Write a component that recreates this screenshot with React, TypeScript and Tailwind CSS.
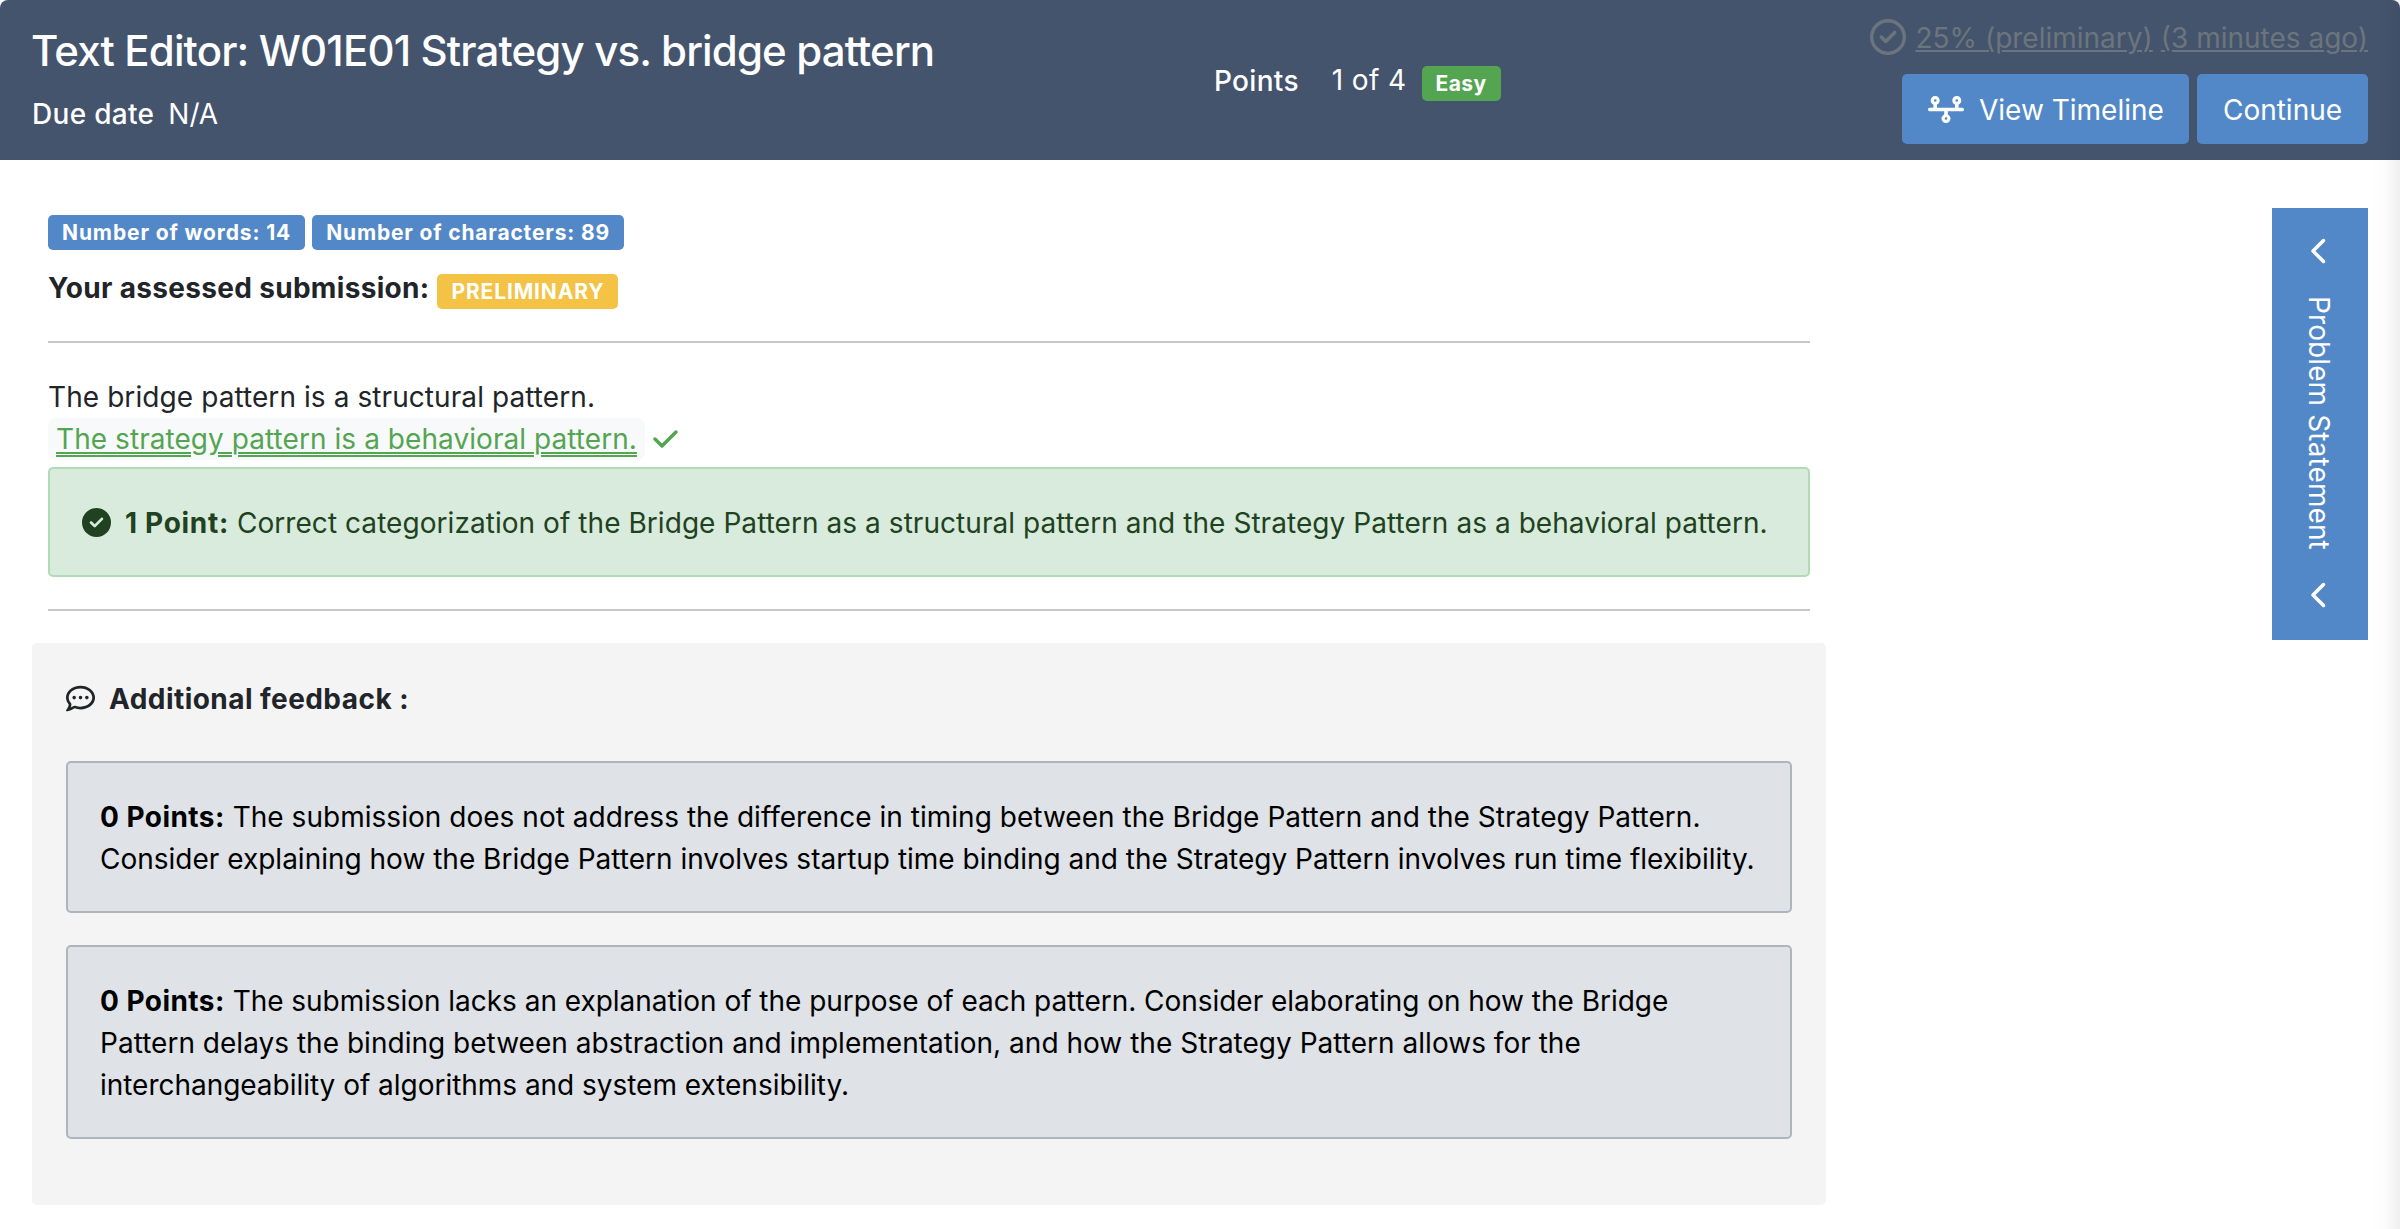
import type { ReactNode } from 'react';
import {
  FaCheck,
  FaChevronLeft,
  FaCircleCheck,
  FaRegCircleCheck,
  FaRegCommentDots,
  FaTimeline,
} from 'react-icons/fa6';

function Badge({ className, children }: { className: string; children: ReactNode }) {
  return (
    <span className={`block h-[35px] rounded-[5px] px-[14px] text-[21px] leading-[35px] font-bold text-white ${className}`}>
      {children}
    </span>
  );
}

function Header() {
  return (
    <header className="flex h-40 rounded-t-lg bg-[#44546d] pr-8 pl-8 text-white">
      <div className="w-[1182px] pt-[25px]">
        <h1 className="-ml-px text-[42px] leading-[51px] font-medium tracking-[-0.85px]">
          Text Editor: W01E01 Strategy vs. bridge pattern
        </h1>
        <div className="mt-[17px] flex">
          <span className="font-medium tracking-[0.3px]">Due date</span>
          <span className="ml-[14px]">N/A</span>
        </div>
      </div>
      <div className="flex pt-[59px]">
        <span className="mt-px font-medium tracking-[0.3px]">Points</span>
        <span className="ml-[33px] tracking-[0.4px]">1 of 4</span>
        <Badge className="mt-[7px] ml-[15px] bg-[#54a551] tracking-[0.4px]">Easy</Badge>
      </div>
      <div className="ml-auto flex flex-col items-end pt-[17px]">
        <div className="flex text-[#6c757d]">
          <FaRegCircleCheck className="mt-[2px] mr-[9px] size-9" />
          <div className="flex gap-2 underline decoration-2 underline-offset-2">
            <span>25% (preliminary)</span>
            <span>(3 minutes ago)</span>
          </div>
        </div>
        <div className="mt-[15px] flex gap-2">
          <button className="flex h-[70px] w-[287px] items-center rounded-[5px] bg-[#5388c8] pl-[26px]">
            <FaTimeline className="h-[29px] w-9" />
            <span className="mt-[2px] ml-[15px]">View Timeline</span>
          </button>
          <button className="h-[70px] w-[171px] rounded-[5px] bg-[#5388c8] pt-[2px]">Continue</button>
        </div>
      </div>
    </header>
  );
}

function FeedbackCard({ className = '', children }: { className?: string; children: ReactNode }) {
  return (
    <div
      className={`rounded-[5px] border-2 border-[#adb5bd] bg-[#dfe2e6] pt-[33px] pr-8 pb-[31px] pl-8 whitespace-nowrap text-black ${className}`}
    >
      <strong className="tracking-[0.45px]">0 Points:</strong> {children}
    </div>
  );
}

function Submission() {
  return (
    <section className="px-4">
      <div className="flex gap-[7px]">
        <Badge className="bg-[#5388c8] tracking-[0.88px]">Number of words: 14</Badge>
        <Badge className="bg-[#5388c8] tracking-[0.83px]">Number of characters: 89</Badge>
      </div>
      <div className="mt-[17px] flex">
        <strong className="tracking-[0.32px]">Your assessed submission:</strong>
        <Badge className="mt-[7px] ml-2 bg-[#f4c244] tracking-[0.85px]">PRELIMINARY</Badge>
      </div>
      <hr className="mt-8 border-t-2 border-[#c8c8c9]" />
      <p className="mt-[33px] tracking-[0.08px]">The bridge pattern is a structural pattern.</p>
      <div className="flex h-[42px] items-center">
        <span className="h-[42px] rounded-lg bg-[#f8f9fb] px-2 tracking-[0.06px] text-[#54a551] underline decoration-double decoration-2 underline-offset-3">
          The strategy pattern is a behavioral pattern.
        </span>
        <FaCheck className="ml-[8px] h-7 w-[25px] text-[#54a551]" />
      </div>
      <div className="mt-[7px] flex h-[110px] rounded-[5px] border-2 border-[#b1dbb7] bg-[#d9ebdc] pt-[33px] pl-8 whitespace-nowrap text-[#204220]">
        <FaCircleCheck className="mt-[6px] mr-[14px] size-[29px]" />
        <p className="tracking-[0.055px]">
          <strong className="tracking-[0.7px]">1 Point:</strong> Correct categorization of the Bridge Pattern as a
          structural pattern and the Strategy Pattern as a behavioral pattern.
        </p>
      </div>
      <hr className="mt-8 border-t-2 border-[#c8c8c9]" />
    </section>
  );
}

function AdditionalFeedback() {
  return (
    <section className="mt-8 h-[562px] rounded-[5px] bg-[#f4f4f4] px-[34px] pt-[35px]">
      <h2 className="flex items-center font-bold tracking-[0.45px]">
        <FaRegCommentDots className="mr-[14px] mb-px size-[29px]" />
        Additional feedback :
      </h2>
      <FeedbackCard className="mt-[41px]">
        <span className="tracking-[0.03px]">
          The submission does not address the difference in timing between the Bridge Pattern and the Strategy Pattern.
        </span>
        <br />
        Consider explaining how the Bridge Pattern involves startup time binding and the Strategy Pattern involves run
        time flexibility.
      </FeedbackCard>
      <FeedbackCard className="mt-8">
        <span className="tracking-[-0.03px]">
          The submission lacks an explanation of the purpose of each pattern. Consider elaborating on how the Bridge
        </span>
        <br />
        <span className="tracking-[0.02px]">
          Pattern delays the binding between abstraction and implementation, and how the Strategy Pattern allows for the
        </span>
        <br />
        <span className="tracking-[-0.03px]">interchangeability of algorithms and system extensibility.</span>
      </FeedbackCard>
    </section>
  );
}

function ProblemStatementTab() {
  return (
    <aside className="mt-12 flex h-[432px] w-24 flex-col items-center justify-between bg-[#5388c8] pt-[29px] pb-[31px] text-white">
      <FaChevronLeft className="h-7 w-[18px]" />
      <span className="mr-[2px] tracking-[0.1px] [writing-mode:vertical-rl]">Problem Statement</span>
      <FaChevronLeft className="h-7 w-[18px]" />
    </aside>
  );
}

export default function App() {
  return (
    <div className="relative h-[1229px] w-[2400px] overflow-hidden bg-white font-['Inter',sans-serif] text-[28px] leading-[42px] text-[#212529]">
      <Header />
      <main className="flex justify-between px-8">
        <div className="w-[1794px] pt-[55px]">
          <Submission />
          <AdditionalFeedback />
        </div>
        <ProblemStatementTab />
      </main>
      {/* Soft shade along the right edge of the window */}
      <div className="pointer-events-none absolute inset-y-0 right-0 w-8 bg-linear-to-r from-transparent via-black/1 to-black/6" />
    </div>
  );
}
